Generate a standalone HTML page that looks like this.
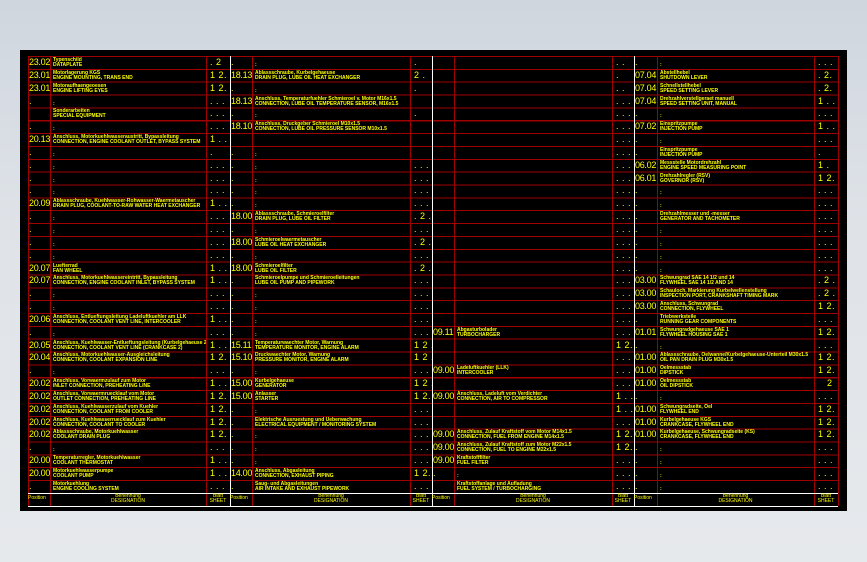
<!DOCTYPE html>
<html><head><meta charset="utf-8"><style>
html,body{margin:0;padding:0;width:867px;height:562px;overflow:hidden;background:linear-gradient(#cfd6de,#dfe3e8 40%,#e6e9ec);font-family:"Liberation Sans",sans-serif}
#blk{position:absolute;left:20px;top:50px;width:827px;height:461px;background:#000}
#rows{position:absolute;left:28px;top:56px;width:810px;height:437px;background:repeating-linear-gradient(to bottom,#a00000 0 1px,transparent 1px 12.85px)}
.v{position:absolute;top:56px;height:450px;width:1px;background:#a00000}
.w{background:#fff}
.h{position:absolute;left:28px;width:810px;height:1px;background:#fff}
#g{position:absolute;left:28px;top:56px;width:810px;display:grid;grid-template-columns:22px 156px 24px 22px 158px 22px 22px 158px 22px 23px 157px 24px;grid-template-rows:repeat(34,12.85px) 13px;color:#ff0;overflow:hidden}
#g>*{overflow:hidden;white-space:nowrap;font-style:normal;font-weight:normal}
.p{font-size:9px;line-height:12.85px;padding-left:1px;letter-spacing:-.3px}
.d{font-size:5px;line-height:5px;padding:2px 0 0 3px;font-weight:bold!important}
.s{font-size:9px;line-height:12.85px;padding-left:4px;letter-spacing:.5px}
.f{font-size:5px;line-height:5.5px;text-align:center;padding-top:1px}
</style></head><body>
<div id="blk"></div>
<div id="rows"></div>
<div class="v" style="left:28px"></div><div class="v" style="left:50px"></div><div class="v" style="left:206px"></div><div class="v w" style="left:230px"></div>
<div class="v" style="left:252px"></div><div class="v" style="left:410px"></div><div class="v w" style="left:432px"></div>
<div class="v" style="left:454px"></div><div class="v" style="left:612px"></div><div class="v w" style="left:634px"></div>
<div class="v" style="left:657px"></div><div class="v" style="left:814px"></div><div class="v" style="left:838px"></div>
<div class="h" style="top:493px"></div><div class="h" style="top:506px"></div>
<div id="g">
<!--1--><i class="p">23.02</i><i class="d">Typenschild<br>DATAPLATE</i><i class="s">. 2</i><i class="p"> .</i><i class="d"><br>:</i><i class="s">.</i><i class="p"></i><i class="d"></i><i class="s">. .</i><i class="p"> .</i><i class="d"><br>:</i><i class="s">. . .</i>
<!--2--><i class="p">23.01</i><i class="d">Motorlagerung KGS<br>ENGINE MOUNTING, TRANS END</i><i class="s">1 2.</i><i class="p">18.13</i><i class="d">Ablassschraube, Kurbelgehaeuse<br>DRAIN PLUG, LUBE OIL HEAT EXCHANGER</i><i class="s">2 .</i><i class="p"></i><i class="d"></i><i class="s"> .</i><i class="p">07.04</i><i class="d">Abstellhebel<br>SHUTDOWN LEVER</i><i class="s">. 2.</i>
<!--3--><i class="p">23.01</i><i class="d">Motoraufhaengeoesen<br>ENGINE LIFTING EYES</i><i class="s">1 2.</i><i class="p"> .</i><i class="d"><br>:</i><i class="s">.</i><i class="p"></i><i class="d"></i><i class="s">. .</i><i class="p">07.04</i><i class="d">Schnellstellhebel<br>SPEED SETTING LEVER</i><i class="s">. 2.</i>
<!--4--><i class="p"> .</i><i class="d"><br>:</i><i class="s">. . .</i><i class="p">18.13</i><i class="d">Anschluss, Temperaturfuehler Schmieroel v. Motor M16x1.5<br>CONNECTION, LUBE OIL TEMPERATURE SENSOR, M16x1.5</i><i class="s"></i><i class="p"></i><i class="d"></i><i class="s">. . .</i><i class="p">07.04</i><i class="d">Drehzahlverstellgeraet manuell<br>SPEED SETTING UNIT, MANUAL</i><i class="s">1 . .</i>
<!--5--><i class="p"></i><i class="d">Sonderarbeiten<br>SPECIAL EQUIPMENT</i><i class="s">. . .</i><i class="p"> .</i><i class="d"><br>:</i><i class="s">.</i><i class="p"></i><i class="d"></i><i class="s">. . .</i><i class="p"> .</i><i class="d"><br>:</i><i class="s">. . .</i>
<!--6--><i class="p"> .</i><i class="d"><br>:</i><i class="s">. . .</i><i class="p">18.10</i><i class="d">Anschluss, Druckgeber Schmieroel M10x1.5<br>CONNECTION, LUBE OIL PRESSURE SENSOR M10x1.5</i><i class="s"></i><i class="p"></i><i class="d"></i><i class="s">. . .</i><i class="p">07.02</i><i class="d">Einspritzpumpe<br>INJECTION PUMP</i><i class="s">1 . .</i>
<!--7--><i class="p">20.13</i><i class="d">Anschluss, Motorkuehlwasseraustritt, Bypassleitung<br>CONNECTION, ENGINE COOLANT OUTLET, BYPASS SYSTEM</i><i class="s">1 . .</i><i class="p"></i><i class="d"></i><i class="s"></i><i class="p"></i><i class="d"></i><i class="s">. . .</i><i class="p"> .</i><i class="d"><br>:</i><i class="s">. . .</i>
<!--8--><i class="p"> .</i><i class="d"><br>:</i><i class="s">.</i><i class="p"> .</i><i class="d"><br>:</i><i class="s"></i><i class="p"></i><i class="d"></i><i class="s">. . .</i><i class="p"> .</i><i class="d">Einspritzpumpe<br>INJECTION PUMP</i><i class="s">.</i>
<!--9--><i class="p"> .</i><i class="d"><br>:</i><i class="s">. . .</i><i class="p"> .</i><i class="d"><br>:</i><i class="s">. . .</i><i class="p"></i><i class="d"></i><i class="s">. . .</i><i class="p">06.02</i><i class="d">Messstelle Motordrehzahl<br>ENGINE SPEED MEASURING POINT</i><i class="s">1 .</i>
<!--10--><i class="p"> .</i><i class="d"><br>:</i><i class="s">. . .</i><i class="p"> .</i><i class="d"><br>:</i><i class="s">. . .</i><i class="p"></i><i class="d"></i><i class="s">. . .</i><i class="p">06.01</i><i class="d">Drehzahlregler (RSV)<br>GOVERNOR (RSV)</i><i class="s">1 2.</i>
<!--11--><i class="p"> .</i><i class="d"><br>:</i><i class="s">. . .</i><i class="p"> .</i><i class="d"><br>:</i><i class="s">. . .</i><i class="p"></i><i class="d"></i><i class="s">. . .</i><i class="p"> .</i><i class="d"><br>:</i><i class="s">. . .</i>
<!--12--><i class="p">20.09</i><i class="d">Ablassschraube, Kuehlwasser-Rohwasser-Waermetauscher<br>DRAIN PLUG, COOLANT-TO-RAW WATER HEAT EXCHANGER</i><i class="s">1 . .</i><i class="p"> .</i><i class="d"><br>:</i><i class="s">. . .</i><i class="p"></i><i class="d"></i><i class="s">. . .</i><i class="p"> .</i><i class="d"><br>:</i><i class="s">. . .</i>
<!--13--><i class="p"> .</i><i class="d"><br>:</i><i class="s">. . .</i><i class="p">18.00</i><i class="d">Ablassschraube, Schmieroelfilter<br>DRAIN PLUG, LUBE OIL FILTER</i><i class="s">. 2 .</i><i class="p"></i><i class="d"></i><i class="s">. . .</i><i class="p"> .</i><i class="d">Drehzahlmesser und -messer<br>GENERATOR AND TACHOMETER</i><i class="s">. . .</i>
<!--14--><i class="p"> .</i><i class="d"><br>:</i><i class="s">. . .</i><i class="p"> .</i><i class="d"><br>:</i><i class="s">. . .</i><i class="p"></i><i class="d"></i><i class="s">. . .</i><i class="p"> .</i><i class="d"><br>:</i><i class="s">. . .</i>
<!--15--><i class="p"> .</i><i class="d"><br>:</i><i class="s">. . .</i><i class="p">18.00</i><i class="d">Schmieroelwaermetauscher<br>LUBE OIL HEAT EXCHANGER</i><i class="s">. 2 .</i><i class="p"></i><i class="d"></i><i class="s">. . .</i><i class="p"> .</i><i class="d"><br>:</i><i class="s">. . .</i>
<!--16--><i class="p"> .</i><i class="d"><br>:</i><i class="s">. . .</i><i class="p"> .</i><i class="d"><br>:</i><i class="s">. . .</i><i class="p"></i><i class="d"></i><i class="s">. . .</i><i class="p"> .</i><i class="d"><br>:</i><i class="s">. . .</i>
<!--17--><i class="p">20.07</i><i class="d">Luefterrad<br>FAN WHEEL</i><i class="s">1 . .</i><i class="p">18.00</i><i class="d">Schmieroelfilter<br>LUBE OIL FILTER</i><i class="s">. 2 .</i><i class="p"></i><i class="d"></i><i class="s">. . .</i><i class="p"> .</i><i class="d"><br>:</i><i class="s">. . .</i>
<!--18--><i class="p">20.07</i><i class="d">Anschluss, Motorkuehlwassereintritt, Bypassleitung<br>CONNECTION, ENGINE COOLANT INLET, BYPASS SYSTEM</i><i class="s">1 . .</i><i class="p"> .</i><i class="d">Schmieroelpumpe und Schmieroelleitungen<br>LUBE OIL PUMP AND PIPEWORK</i><i class="s">. . .</i><i class="p"></i><i class="d"></i><i class="s">. . .</i><i class="p">03.00</i><i class="d">Schwungrad SAE 14 1/2 und 14<br>FLYWHEEL SAE 14 1/2 AND 14</i><i class="s">. 2 .</i>
<!--19--><i class="p"> .</i><i class="d"><br>:</i><i class="s">. . .</i><i class="p"> .</i><i class="d"><br>:</i><i class="s">. . .</i><i class="p"></i><i class="d"></i><i class="s">. . .</i><i class="p">03.00</i><i class="d">Schauloch, Markierung Kurbelwellenstellung<br>INSPECTION PORT, CRANKSHAFT TIMING MARK</i><i class="s">. 2 .</i>
<!--20--><i class="p"> .</i><i class="d"><br>:</i><i class="s">. . .</i><i class="p"> .</i><i class="d"><br>:</i><i class="s">. . .</i><i class="p"></i><i class="d"></i><i class="s">. . .</i><i class="p">03.00</i><i class="d">Anschluss, Schwungrad<br>CONNECTION, FLYWHEEL</i><i class="s">1 2.</i>
<!--21--><i class="p">20.06</i><i class="d">Anschluss, Entlueftungsleitung Ladeluftkuehler am LLK<br>CONNECTION, COOLANT VENT LINE, INTERCOOLER</i><i class="s">1 . .</i><i class="p"> .</i><i class="d"><br>:</i><i class="s">. . .</i><i class="p"></i><i class="d"></i><i class="s">. . .</i><i class="p"> .</i><i class="d">Triebwerksteile<br>RUNNING GEAR COMPONENTS</i><i class="s">. . .</i>
<!--22--><i class="p"> .</i><i class="d"><br>:</i><i class="s">. . .</i><i class="p"> .</i><i class="d"><br>:</i><i class="s">. . .</i><i class="p">09.11</i><i class="d">Abgasturbolader<br>TURBOCHARGER</i><i class="s">. . .</i><i class="p">01.01</i><i class="d">Schwungradgehaeuse SAE 1<br>FLYWHEEL HOUSING SAE 1</i><i class="s">1 2.</i>
<!--23--><i class="p">20.05</i><i class="d">Anschluss, Kuehlwasser-Entlueftungsleitung (Kurbelgehaeuse 2)<br>CONNECTION, COOLANT VENT LINE (CRANKCASE 2)</i><i class="s">1 . .</i><i class="p">15.11</i><i class="d">Temperaturwaechter Motor, Warnung<br>TEMPERATURE MONITOR, ENGINE ALARM</i><i class="s">1 2 .</i><i class="p"></i><i class="d"></i><i class="s">1 2.</i><i class="p"> .</i><i class="d"><br>:</i><i class="s">. . .</i>
<!--24--><i class="p">20.04</i><i class="d">Anschluss, Motorkuehlwasser-Ausgleichsleitung<br>CONNECTION, COOLANT EXPANSION LINE</i><i class="s">1 2.</i><i class="p">15.10</i><i class="d">Druckwaechter Motor, Warnung<br>PRESSURE MONITOR, ENGINE ALARM</i><i class="s">1 2 .</i><i class="p"></i><i class="d"></i><i class="s">. . .</i><i class="p">01.00</i><i class="d">Ablassschraube, Oelwanne/Kurbelgehaeuse-Unterteil M30x1.5<br>OIL PAN DRAIN PLUG M30x1.5</i><i class="s">1 2.</i>
<!--25--><i class="p"> .</i><i class="d"><br>:</i><i class="s">. . .</i><i class="p"> .</i><i class="d"><br>:</i><i class="s">. . .</i><i class="p">09.00</i><i class="d">Ladeluftkuehler (LLK)<br>INTERCOOLER</i><i class="s">. . .</i><i class="p">01.00</i><i class="d">Oelmessstab<br>DIPSTICK</i><i class="s">1 2.</i>
<!--26--><i class="p">20.02</i><i class="d">Anschluss, Vorwaermzulauf zum Motor<br>INLET CONNECTION, PREHEATING LINE</i><i class="s">1 . .</i><i class="p">15.00</i><i class="d">Kurbelgehaeuse<br>GENERATOR</i><i class="s">1 2 .</i><i class="p"></i><i class="d"></i><i class="s">. . .</i><i class="p">01.00</i><i class="d">Oelmessstab<br>OIL DIPSTICK</i><i class="s">&nbsp; &nbsp;2</i>
<!--27--><i class="p">20.02</i><i class="d">Anschluss, Vorwaermruecklauf vom Motor<br>OUTLET CONNECTION, PREHEATING LINE</i><i class="s">1 2.</i><i class="p">15.00</i><i class="d">Anlasser<br>STARTER</i><i class="s">1 2.</i><i class="p">09.00</i><i class="d">Anschluss, Ladeluft vom Verdichter<br>CONNECTION, AIR TO COMPRESSOR</i><i class="s">1 . .</i><i class="p"> .</i><i class="d"><br>:</i><i class="s">. . .</i>
<!--28--><i class="p">20.02</i><i class="d">Anschluss, Kuehlwasserzulauf vom Kuehler<br>CONNECTION, COOLANT FROM COOLER</i><i class="s">1 2.</i><i class="p"> .</i><i class="d"><br>:</i><i class="s">. . .</i><i class="p"></i><i class="d"></i><i class="s">1 . .</i><i class="p">01.00</i><i class="d">Schwungradseite, Oel<br>FLYWHEEL END</i><i class="s">1 2.</i>
<!--29--><i class="p">20.02</i><i class="d">Anschluss, Kuehlwasserruecklauf zum Kuehler<br>CONNECTION, COOLANT TO COOLER</i><i class="s">1 2.</i><i class="p"> .</i><i class="d">Elektrische Ausruestung und Ueberwachung<br>ELECTRICAL EQUIPMENT / MONITORING SYSTEM</i><i class="s">. . .</i><i class="p"></i><i class="d"></i><i class="s">. . .</i><i class="p">01.00</i><i class="d">Kurbelgehaeuse KGS<br>CRANKCASE, FLYWHEEL END</i><i class="s">1 2.</i>
<!--30--><i class="p">20.02</i><i class="d">Ablassschraube, Motorkuehlwasser<br>COOLANT DRAIN PLUG</i><i class="s">1 2.</i><i class="p"> .</i><i class="d"><br>:</i><i class="s">. . .</i><i class="p">09.00</i><i class="d">Anschluss, Zulauf Kraftstoff vom Motor M14x1.5<br>CONNECTION, FUEL FROM ENGINE M14x1.5</i><i class="s">1 2.</i><i class="p">01.00</i><i class="d">Kurbelgehaeuse, Schwungradseite (KS)<br>CRANKCASE, FLYWHEEL END</i><i class="s">1 2.</i>
<!--31--><i class="p"> .</i><i class="d"><br>:</i><i class="s">. . .</i><i class="p"> .</i><i class="d"><br>:</i><i class="s">. . .</i><i class="p">09.00</i><i class="d">Anschluss, Zulauf Kraftstoff zum Motor M22x1.5<br>CONNECTION, FUEL TO ENGINE M22x1.5</i><i class="s">1 2.</i><i class="p"> .</i><i class="d"><br>:</i><i class="s">. . .</i>
<!--32--><i class="p">20.00</i><i class="d">Temperaturregler, Motorkuehlwasser<br>COOLANT THERMOSTAT</i><i class="s">1 . .</i><i class="p"> .</i><i class="d"><br>:</i><i class="s">. . .</i><i class="p">09.00</i><i class="d">Kraftstofffilter<br>FUEL FILTER</i><i class="s">. . .</i><i class="p"> .</i><i class="d"><br>:</i><i class="s">. . .</i>
<!--33--><i class="p">20.00</i><i class="d">Motorkuehlwasserpumpe<br>COOLANT PUMP</i><i class="s">1 . .</i><i class="p">14.00</i><i class="d">Anschluss, Abgasleitung<br>CONNECTION, EXHAUST PIPING</i><i class="s">1 2.</i><i class="p"> .</i><i class="d"><br>:</i><i class="s">. . .</i><i class="p"> .</i><i class="d"><br>:</i><i class="s">. . .</i>
<!--34--><i class="p"> .</i><i class="d">Motorkuehlung<br>ENGINE COOLING SYSTEM</i><i class="s">. . .</i><i class="p"> .</i><i class="d">Saug- und Abgasleitungen<br>AIR INTAKE AND EXHAUST PIPEWORK</i><i class="s">. . .</i><i class="p"></i><i class="d">Kraftstoffanlage und Aufladung<br>FUEL SYSTEM / TURBOCHARGING</i><i class="s">. . .</i><i class="p"> .</i><i class="d"><br>:</i><i class="s">. . .</i>
<!--F--><i class="f" style="padding-top:3px;text-align:left">Position</i><i class="f">Benennung<br>DESIGNATION</i><i class="f">Blatt<br>SHEET</i><i class="f" style="padding-top:3px;text-align:left">Position</i><i class="f">Benennung<br>DESIGNATION</i><i class="f">Blatt<br>SHEET</i><i class="f" style="padding-top:3px;text-align:left">Position</i><i class="f">Benennung<br>DESIGNATION</i><i class="f">Blatt<br>SHEET</i><i class="f" style="padding-top:3px;text-align:left">Position</i><i class="f">Benennung<br>DESIGNATION</i><i class="f">Blatt<br>SHEET</i>
</div>
</body></html>
